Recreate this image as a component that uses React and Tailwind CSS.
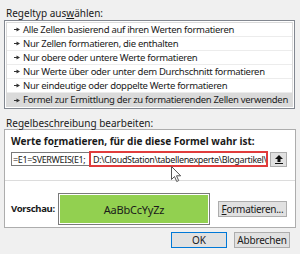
const rules = [
  "Alle Zellen basierend auf ihren Werten formatieren",
  "Nur Zellen formatieren, die enthalten",
  "Nur obere oder untere Werte formatieren",
  "Nur Werte über oder unter dem Durchschnitt formatieren",
  "Nur eindeutige oder doppelte Werte formatieren",
  "Formel zur Ermittlung der zu formatierenden Zellen verwenden",
];

const Arrow = () => (
  <svg width="6" height="5" viewBox="0 0 6 5" className="shrink-0">
    <path d="M0 2h2.5V0.5L6 2.5 2.5 4.5V3H0z" fill="#333" />
  </svg>
);

const UploadIcon = () => (
  <svg width="8" height="9" viewBox="0 0 8 9">
    <path d="M4 0L0 4h2.5v3h3V4H8z" fill="#111" />
    <rect x="0" y="8" width="8" height="1" fill="#111" />
  </svg>
);

const Cursor = () => (
  <svg width="11" height="17" viewBox="0 0 11 17" className="absolute left-[171px] top-[166px]">
    <path
      d="M0.5 0.5v13l3-3 2.2 5 2-0.9-2.2-4.8h4.2z"
      fill="#fff"
      stroke="#555"
      strokeWidth="1"
      strokeLinejoin="round"
    />
  </svg>
);

export default function App() {
  return (
    <div
      className="relative w-[300px] h-[254px] bg-[#f0f0f0] text-[#1a1a1a] text-[10px] leading-none overflow-hidden px-[4px] pt-[7px]"
      style={{ fontFamily: '"Noto Sans", "Open Sans", sans-serif' }}
    >
      {/* Rule type */}
      <div className="pl-[2px] h-[12px] flex items-center">
        Regeltyp aus<span className="underline">w</span>ählen:
      </div>
      <div className="mt-[1px] w-[291px] h-[89px] border border-[#828790] bg-white p-[1px]">
        <div className="border border-[#dadada] h-full">
          {rules.map((r, i) => (
            <div
              key={r}
              className={
                "h-[14px] flex items-center gap-[3px] pl-[7px] " +
                (i === rules.length - 1
                  ? "bg-[#dadada]"
                  : "border-b border-[#ececec]")
              }
            >
              <Arrow />
              <span className="whitespace-nowrap text-[9.5px] tracking-[-0.3px]">{r}</span>
            </div>
          ))}
        </div>
      </div>

      {/* Rule description */}
      <div className="pl-[2px] mt-[8px] h-[12px] flex items-center">
        Re<span className="underline">g</span>elbeschreibung bearbeiten:
      </div>
      <div className="w-[292px] h-[99px] border border-[#adadad] bg-white flex flex-col">
        <div className="px-[6px] pt-[5px] h-[51px] border-b border-[#dcdcdc]">
          <div className="font-bold h-[11px] flex items-center whitespace-nowrap">
            Werte fo<span className="underline">r</span>matieren, für die diese Formel wahr ist:
          </div>
          <div className="mt-[5px] flex items-center text-[9px] tracking-[-0.35px]">
            <div className="shrink-0 w-[78px] h-[14px] border border-[#7a7a7a] border-r-0 flex items-center overflow-hidden whitespace-nowrap pl-[1px]">
              =E1=SVERWEIS(E1;
            </div>
            <div className="shrink-0 w-[179px] h-[16px] border-2 border-[#e03c3c] flex items-center overflow-hidden whitespace-nowrap pl-[2px]">
              D:\CloudStation\tabellenexperte\Blogartikel\
            </div>
            <div className="shrink-0 ml-[2px] w-[17px] h-[15px] border border-[#adadad] bg-[#e1e1e1] flex items-center justify-center">
              <UploadIcon />
            </div>
          </div>
        </div>
        <div className="flex items-center px-[6px] pt-[12px]">
          <div className="shrink-0 font-bold w-[47px] text-[9.5px] tracking-[-0.3px] whitespace-nowrap">Vorschau:</div>
          <div className="shrink-0 w-[152px] h-[32px] border border-[#7a7a7a] p-[1px] bg-white">
            <div className="h-full bg-[#92d050] flex items-center justify-center text-[11px] tracking-[-0.2px]">
              AaBbCcYyZz
            </div>
          </div>
          <div className="shrink-0 ml-[8px] w-[69px] h-[16px] border border-[#adadad] bg-[#e1e1e1] flex items-center justify-center tracking-[-0.3px] whitespace-nowrap">
            <span className="underline">F</span>ormatieren...
          </div>
        </div>
      </div>

      {/* Buttons */}
      <div className="flex justify-end gap-[7px] pr-[6px] mt-[4px]">
        <div className="w-[56px] h-[16px] border border-[#0078d7] bg-[#e1e1e1] flex items-center justify-center">
          OK
        </div>
        <div className="w-[56px] h-[16px] border border-[#adadad] bg-[#e1e1e1] flex items-center justify-center tracking-[-0.2px]">
          Abbrechen
        </div>
      </div>

      <Cursor />
    </div>
  );
}
